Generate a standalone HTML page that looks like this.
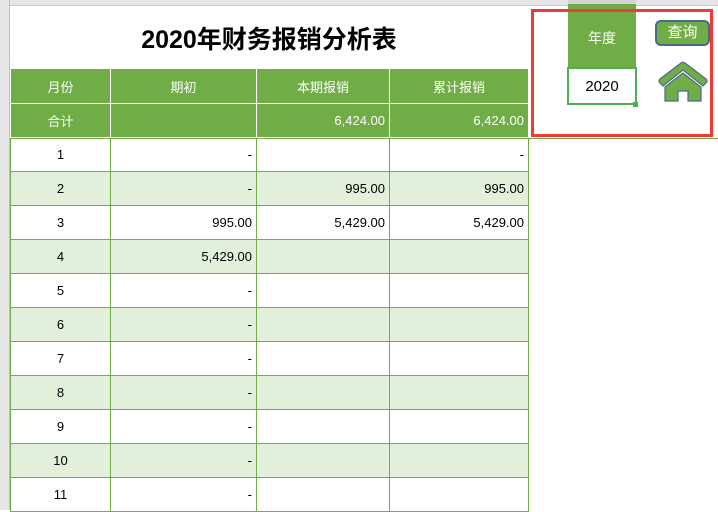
<!DOCTYPE html><html><head><meta charset="utf-8"><style>
body{margin:0;width:718px;height:510px;overflow:hidden;background:#fff;font-family:"Liberation Sans","Noto Sans CJK SC",sans-serif;font-size:13px;position:relative}
.a{position:absolute;box-sizing:border-box}
table{position:absolute;left:10px;top:68px;border-collapse:collapse;table-layout:fixed}
td{border:1px solid #70ad47;height:34px;padding:0 4px;box-sizing:border-box;font-size:13px;white-space:nowrap}
tr.h td{background:#70ad47;color:#fff;text-align:center;border-color:#fff}
tr.h td.r{text-align:right}
tr.g td{background:#e2efda}
td.c{text-align:center}td.r{text-align:right}
</style></head><body>
<div class="a" style="left:0;top:0;width:718px;height:6px;background:#e6e6e6;border-bottom:1px solid #c8c8c8"></div>
<div class="a" style="left:568px;top:0;width:68px;height:6px;background:#d4d4d4;border-bottom:2px solid #70ad47"></div>
<div class="a" style="left:0;top:0;width:10px;height:510px;background:#e6e6e6;border-right:1px solid #c0c0c0"></div>
<div class="a" style="left:10px;top:7px;width:518px;height:62px;font-weight:bold;font-size:25px;text-align:center;line-height:66px;color:#000">2020年财务报销分析表</div>
<div class="a" style="left:10px;top:138px;width:708px;height:1px;background:#70ad47"></div>
<table>
<colgroup><col style="width:100px"><col style="width:146px"><col style="width:133px"><col style="width:139px"></colgroup>
<tr class="h"><td style="height:35px">月份</td><td>期初</td><td>本期报销</td><td>累计报销</td></tr>
<tr class="h"><td>合计</td><td></td><td class="r">6,424.00</td><td class="r">6,424.00</td></tr>
<tr><td class="c">1</td><td class="r">-</td><td></td><td class="r">-</td></tr>
<tr class="g"><td class="c">2</td><td class="r">-</td><td class="r">995.00</td><td class="r">995.00</td></tr>
<tr><td class="c">3</td><td class="r">995.00</td><td class="r">5,429.00</td><td class="r">5,429.00</td></tr>
<tr class="g"><td class="c">4</td><td class="r">5,429.00</td><td></td><td></td></tr>
<tr><td class="c">5</td><td class="r">-</td><td></td><td></td></tr>
<tr class="g"><td class="c">6</td><td class="r">-</td><td></td><td></td></tr>
<tr><td class="c">7</td><td class="r">-</td><td></td><td></td></tr>
<tr class="g"><td class="c">8</td><td class="r">-</td><td></td><td></td></tr>
<tr><td class="c">9</td><td class="r">-</td><td></td><td></td></tr>
<tr class="g"><td class="c">10</td><td class="r">-</td><td></td><td></td></tr>
<tr><td class="c">11</td><td class="r">-</td><td></td><td></td></tr>
</table>
<div class="a" style="left:568px;top:6px;width:68px;height:61px;background:#70ad47;color:#fff;text-align:center;line-height:64px;font-size:14px">年度</div>
<div class="a" style="left:567px;top:67px;width:70px;height:38px;border:2px solid #4caf50;text-align:center;line-height:36px;font-size:15px">2020</div>
<div class="a" style="left:633px;top:102px;width:5px;height:5px;background:#4caf50"></div>
<div class="a" style="left:655px;top:20px;width:55px;height:26px;background:#70ad47;border:2px solid #4a6a8a;border-radius:6px;color:#fff;text-align:center;line-height:22px;font-size:15px">查询</div>
<svg class="a" style="left:657px;top:61px" width="52" height="42" viewBox="0 0 52 42">
<path d="M3 22 Q1 20 3 18 L24 2 Q26 0.5 28 2 L49 18 Q51 20 49 22 L46 25 L26 9 L6 25 Z" fill="#70ad47" stroke="#4a6a8a" stroke-width="1.2"/>
<path d="M8 26 L26 12 L44 26 L44 40 L31 40 L31 30 L21 30 L21 40 L8 40 Z" fill="#70ad47" stroke="#4a6a8a" stroke-width="1.2"/>
</svg>
<div class="a" style="left:531px;top:9px;width:182px;height:128px;border:3px solid #f03a3a"></div>
</body></html>
